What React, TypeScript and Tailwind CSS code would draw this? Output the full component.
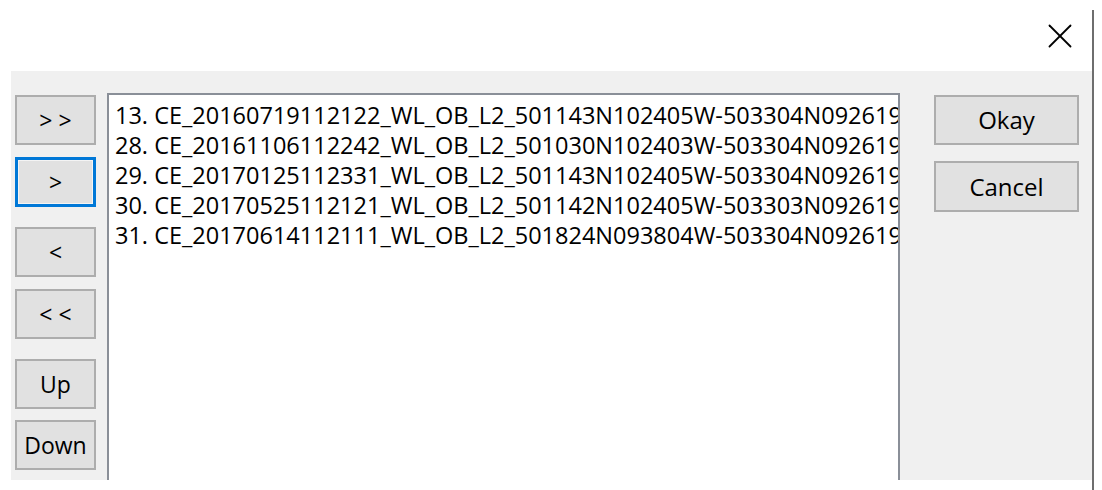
import { X } from "lucide-react";

const rows = [
  "13. CE_20160719112122_WL_OB_L2_501143N102405W-503304N092619W",
  "28. CE_20161106112242_WL_OB_L2_501030N102403W-503304N092619W",
  "29. CE_20170125112331_WL_OB_L2_501143N102405W-503304N092619W",
  "30. CE_20170525112121_WL_OB_L2_501142N102405W-503303N092619W",
  "31. CE_20170614112111_WL_OB_L2_501824N093804W-503304N092619W",
];

function SideButton({
  label,
  focused = false,
  className = "",
}: {
  label: string;
  focused?: boolean;
  className?: string;
}) {
  return (
    <button
      type="button"
      className={
        "flex h-[50px] w-[81px] items-center justify-center bg-[#e1e1e1] text-[23px] text-black " +
        (focused
          ? "border-[3px] border-[#0078d7] shadow-[inset_0_0_0_1px_#f4f4f4] "
          : "border-2 border-[#adadad] ") +
        className
      }
    >
      {label}
    </button>
  );
}

export default function App() {
  return (
    <div
      className="flex h-[490px] w-[1102px] overflow-hidden bg-white"
      style={{ fontFamily: '"Open Sans", "Noto Sans", sans-serif' }}
    >
      <div className="flex w-[1092px] flex-col">
        <div className="flex h-[71px] items-center justify-end pr-[11px]">
          <X size={42} strokeWidth={1.05} className="text-black" />
        </div>

        <div className="ml-[11px] flex h-[409px] bg-[#f0f0f0] pl-[4px] pt-[22px]">
          <div className="flex flex-col pt-[2px]">
            <SideButton label="> >" />
            <SideButton label=">" focused className="mt-[12px]" />
            <SideButton label="<" className="mt-[20px]" />
            <SideButton label="< <" className="mt-[12px]" />
            <SideButton label="Up" className="mt-[20px]" />
            <SideButton label="Down" className="mt-[11px]" />
          </div>

          <div className="ml-[11px] h-[387px] w-[793px] overflow-hidden border-2 border-b-0 border-[#8a8f98] bg-white pl-[6px] pt-[5px]">
            {rows.map((r) => (
              <div
                key={r}
                className="whitespace-nowrap text-[23.5px] leading-[30px] text-black"
              >
                {r}
              </div>
            ))}
          </div>

          <div className="ml-[34px] flex flex-col gap-[16px] pt-[2px]">
            <button
              type="button"
              className="flex h-[50px] w-[145px] items-center justify-center border-2 border-[#adadad] bg-[#e1e1e1] text-[24px] text-black"
            >
              Okay
            </button>
            <button
              type="button"
              className="flex h-[51px] w-[145px] items-center justify-center border-2 border-[#adadad] bg-[#e1e1e1] text-[24px] text-black"
            >
              Cancel
            </button>
          </div>
        </div>
      </div>
      <div className="mt-[10px] h-[480px] w-[2px] bg-[#6e6e6e]" />
    </div>
  );
}
